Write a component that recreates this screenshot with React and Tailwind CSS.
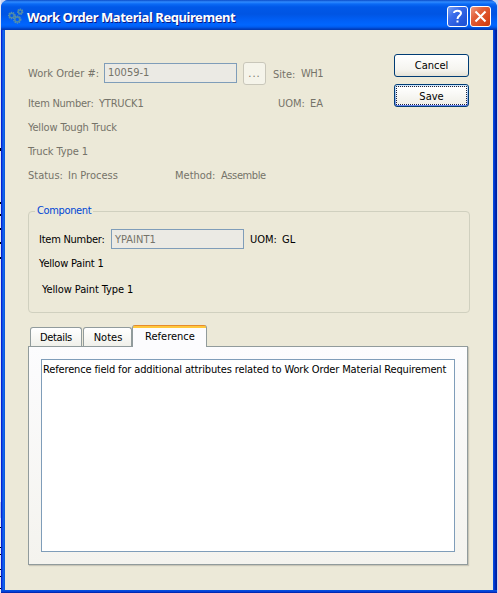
import React from "react";

const T = ({ className = "", children }) => (
  <span className={"block whitespace-pre leading-[14px] " + className}>{children}</span>
);

const Gears = () => (
  <svg width="17" height="17" viewBox="0 0 17 17" fill="none" className="shrink-0">
    <g stroke="#5a93b4" strokeWidth="1.4" strokeDasharray="1.3 0.9">
      <circle cx="3.8" cy="7.5" r="3.1" />
      <circle cx="9.3" cy="11.6" r="3.4" />
      <circle cx="12.2" cy="3.8" r="2.5" />
    </g>
    <g stroke="#4f8aa6" strokeWidth="1.5">
      <circle cx="3.8" cy="7.5" r="2.3" />
      <circle cx="9.3" cy="11.6" r="2.5" />
      <circle cx="12.2" cy="3.8" r="1.8" />
    </g>
  </svg>
);

const TitleBar = () => (
  <div className="flex h-[30px] shrink-0 items-start rounded-t-[7px] bg-[linear-gradient(180deg,#0a4cc8_0px,#2f8bff_2px,#0a6af5_4px,#0058e8_7px,#0055e3_14px,#0060f8_21px,#0066ff_25px,#005cf0_27px,#003fc0_29px,#0038b0_30px)] pr-[6px] pl-[7px]">
    <div className="mt-[8px]"><Gears /></div>
    <span className="mt-[8px] ml-[2px] whitespace-pre font-['Noto_Sans'] text-[13px] leading-[18px] font-bold tracking-[-0.43px] text-white [text-shadow:1px_1px_0_#0a1883]">Work Order Material Requirement</span>
    <div className="mt-[6px] ml-auto flex gap-[2px]">
      <div className="flex size-[21px] items-center justify-center rounded-[3px] border border-white bg-[linear-gradient(135deg,#7ba2f2_0%,#3a6ceb_35%,#2457da_75%,#1d50d6_100%)]">
        <svg width="19" height="19" viewBox="0 0 19 19" fill="none" stroke="#fff" strokeWidth="2">
          <path d="M6 6C6 3 13 3 13 6.3C13 8.8 9.5 8.5 9.5 12" />
          <path d="M8.5 14.5h2" />
        </svg>
      </div>
      <div className="flex size-[21px] items-center justify-center rounded-[3px] border border-white bg-[linear-gradient(135deg,#ef9a80_0%,#e2603a_35%,#d9471c_75%,#c63a10_100%)]">
        <svg width="19" height="19" viewBox="0 0 19 19" fill="none" stroke="#fff" strokeWidth="2.1">
          <path d="M4.5 4.5L14.5 14.5M14.5 4.5L4.5 14.5" />
        </svg>
      </div>
    </div>
  </div>
);

const Header = () => (
  <div className="flex h-[180px] shrink-0 text-[#757369]">
    <div className="w-[366px] pl-[23px]">
      <div className="flex pt-[33px]">
        <T className="mt-[4px] w-[76px]">Work Order #:</T>
        <div className="h-[20px] w-[133px] border border-[#7f9db9] bg-[#ebeae4] pt-[2px] pl-[3px]"><T>10059-1</T></div>
        <div className="-mt-px ml-[6px] flex h-[23px] w-[23px] justify-center rounded-[3px] border border-[#c9c7ba] bg-[#f5f4ea] pt-[4px]"><T className="tracking-[1px]">...</T></div>
        <T className="mt-[5px] ml-[7px] w-[28px]">Site:</T>
        <T className="mt-[4px] tracking-[-0.5px]">WH1</T>
      </div>
      <div className="mt-[12px] flex">
        <T className="w-[71px] tracking-[-0.25px]">Item Number:</T>
        <T className="w-[179px] tracking-[-0.2px]">YTRUCK1</T>
        <T className="w-[32px]">UOM:</T>
        <T>EA</T>
      </div>
      <T className="mt-[10px] tracking-[-0.15px]">Yellow Tough Truck</T>
      <T className="mt-[10px] tracking-[-0.1px]">Truck Type 1</T>
      <div className="mt-[10px] flex">
        <T className="w-[40px]">Status:</T>
        <T className="w-[107px]">In Process</T>
        <T className="w-[46px]">Method:</T>
        <T className="tracking-[-0.4px]">Assemble</T>
      </div>
    </div>
    <div className="flex flex-col gap-[7px] pt-[24px] pl-[23px] text-black">
      <div className="flex h-[23px] w-[75px] items-center justify-center rounded-[3px] border border-[#003c74] bg-[linear-gradient(180deg,#ffffff,#f5f4ef_70%,#e5e2d6)] pt-px"><T>Cancel</T></div>
      <div className="h-[23px] w-[75px] rounded-[3px] border border-[#003c74] bg-[linear-gradient(180deg,#cee7ff,#98b8ea_60%,#6982ee)] p-px">
        <div className="flex h-full items-center justify-center border border-dotted border-[#1b2440] bg-[linear-gradient(180deg,#ffffff,#f0efe8)] pt-[2px]"><T>Save</T></div>
      </div>
    </div>
  </div>
);

const Component = () => (
  <fieldset className="ml-[23px] h-[109px] w-[442px] shrink-0 rounded-[4px] border border-[#d0d0bf] pl-[6px] text-black">
    <legend className="px-[2px] text-[#0046d5]"><T className="tracking-[-0.35px]">Component</T></legend>
    <div className="flex pt-[11px] pl-[4px]">
      <T className="mt-[4px] w-[72px] tracking-[-0.25px]">Item Number:</T>
      <div className="h-[20px] w-[133px] border border-[#7f9db9] bg-[#ebeae4] pt-[3px] pl-[3px] text-[#757369]"><T>YPAINT1</T></div>
      <T className="mt-[4px] ml-[6px] w-[32px]">UOM:</T>
      <T className="mt-[4px]">GL</T>
    </div>
    <T className="mt-[8px] pl-[4px] tracking-[-0.2px]">Yellow Paint 1</T>
    <T className="mt-[12px] pl-[7px] tracking-[-0.1px]">Yellow Paint Type 1</T>
  </fieldset>
);

const Tabs = () => (
  <div className="mt-[12px] ml-[23px] w-[440px] shrink-0 text-black">
    <div className="relative z-10 -mb-px flex h-[22px] items-end pl-[2px]">
      <div className="mb-px flex h-[19px] w-[52px] justify-center rounded-t-[3px] border border-b-0 border-[#919b9c] bg-[linear-gradient(180deg,#fff,#f0f0ea)] pt-[3px]"><T className="tracking-[-0.35px]">Details</T></div>
      <div className="mb-px ml-px flex h-[19px] w-[49px] justify-center rounded-t-[3px] border border-b-0 border-[#919b9c] bg-[linear-gradient(180deg,#fff,#f0f0ea)] pt-[3px] pl-px"><T>Notes</T></div>
      <div className="flex h-[22px] w-[75px] justify-center overflow-hidden rounded-t-[3px] border-x border-[#919b9c] bg-[linear-gradient(180deg,#e68b2c_1px,#ffc73c_1px,#ffc73c_3px,#fcfcfe_3px)] pt-[5px] pl-px"><T>Reference</T></div>
    </div>
    <div className="h-[219px] w-[440px] border border-[#919b9c] bg-[linear-gradient(180deg,#fcfcfe,#f4f3ee)] pt-[12px] pl-[12px] shadow-[1px_1px_1px_#c9c6b8]">
      <div className="h-[193px] w-[414px] border border-[#7f9db9] bg-white pt-[3px] pl-px"><T className="tracking-[-0.145px]">Reference field for additional attributes related to Work Order Material Requirement</T></div>
    </div>
  </div>
);

export default function App() {
  return (
    <div className="flex h-[593px] w-[498px] overflow-hidden bg-[#c9d4f3] font-['DejaVu_Sans_Condensed','DejaVu_Sans',sans-serif] text-[11px] [font-stretch:condensed]">
      <div className="flex w-px shrink-0 flex-col bg-[#e4e8f6]">
        <div className="mt-[148px] h-[3px] bg-black" />
        <div className="mt-[51px] h-[2px] bg-black" />
        <div className="mt-[10px] h-[2px] bg-black" />
        <div className="mt-[12px] h-[2px] bg-black" />
        <div className="mt-[12px] h-[2px] bg-black" />
        <div className="mt-[13px] h-[2px] bg-black" />
        <div className="mt-[243px] h-[16px] bg-[#b4c3ec]" />
        <div className="mt-[9px] h-px bg-black" />
        <div className="mt-[19px] h-px bg-black" />
        <div className="mt-[6px] h-px bg-black" />
        <div className="mt-[14px] h-px bg-black" />
        <div className="mt-[6px] h-px bg-black" />
        <div className="mt-[11px] h-px bg-black" />
      </div>
      <div className="flex h-[593px] w-[496px] shrink-0 flex-col rounded-t-[8px] bg-[linear-gradient(90deg,#0019cf_0px,#0831d9_1px,#166aee_2px,#0855dd_4px,#0855dd_492px,#003ddc_493px,#001ea0_495px)]">
        <TitleBar />
        <div className="mx-[4px] flex h-[560px] w-[488px] shrink-0 flex-col bg-[#ece9d8]">
          <Header />
          <div className="-mt-[6px]"><Component /></div>
          <Tabs />
        </div>
        <div className="h-[3px] bg-[linear-gradient(180deg,#0855dd,#0441d8_50%,#001ea0)]" />
      </div>
    </div>
  );
}
